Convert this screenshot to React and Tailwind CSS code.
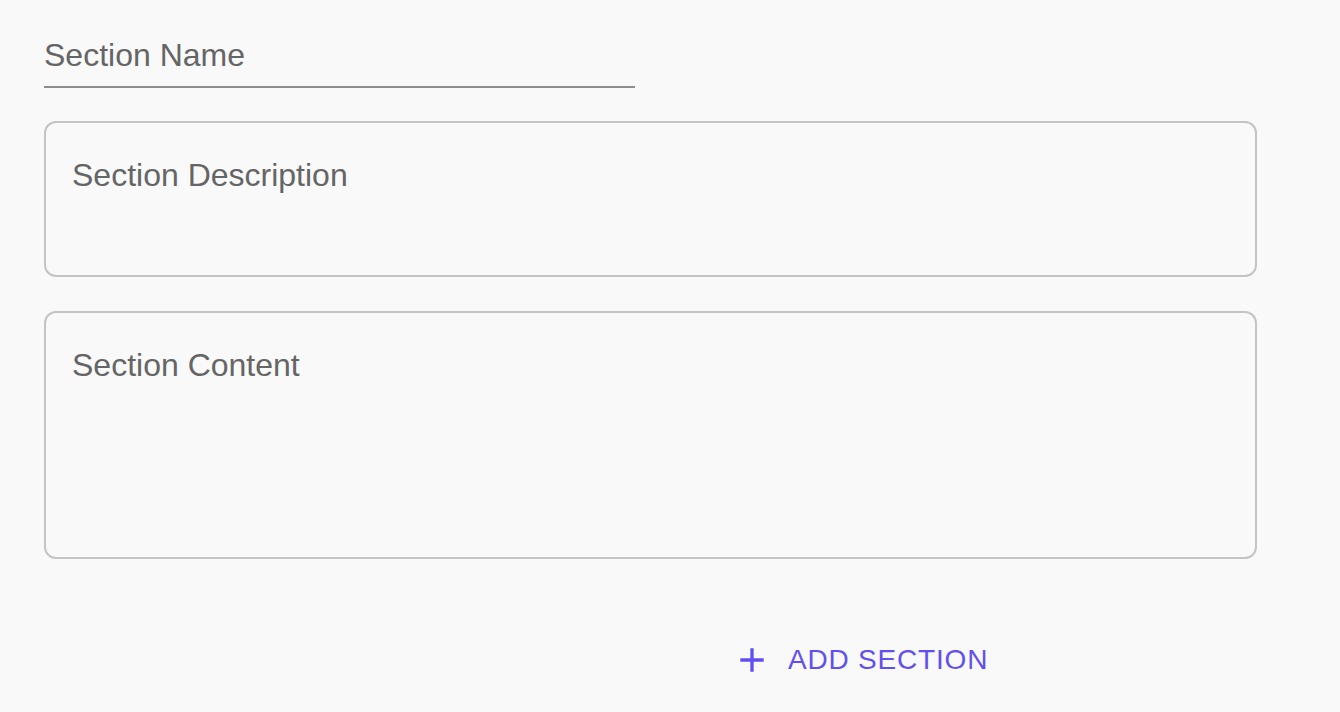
import React from "react";

const font = { fontFamily: '"Liberation Sans", Arial, sans-serif' };

const AddIcon = () => (
  <svg viewBox="0 0 24 24" className="w-10 h-10 fill-[#6150f0]">
    <path d="M19 13h-6v6h-2v-6H5v-2h6V5h2v6h6v2z" />
  </svg>
);

const App = () => {
  return (
    <div
      className="w-[1340px] h-[712px] bg-[#f9f9f9] overflow-hidden"
      style={font}
    >
      <div className="pl-[44px] pt-[37px] w-[1257px]">
        {/* Section name */}
        <div className="w-[591px] border-b-2 border-[#8e8e8e] pb-[13px]">
          <div className="text-[32px] leading-[36px] text-[#656565]">
            Section Name
          </div>
        </div>

        {/* Description */}
        <div className="mt-[33px] h-[156px] border-2 border-[#c4c4c4] rounded-[12px] pl-[26px] pt-[34px]">
          <div className="text-[32px] leading-[36px] text-[#656565]">
            Section Description
          </div>
        </div>

        {/* Content */}
        <div className="mt-[34px] h-[248px] border-2 border-[#c4c4c4] rounded-[12px] pl-[26px] pt-[34px]">
          <div className="text-[32px] leading-[36px] text-[#656565]">
            Section Content
          </div>
        </div>

        <div className="mt-[81px] pl-[680px]">
          <button className="flex items-center px-4 py-0 h-[40px] text-[#6150f0]">
            <span className="-ml-2 mr-4 flex">
              <AddIcon />
            </span>
            <span className="text-[28px] leading-[36px] tracking-[0.8px] uppercase">
              Add Section
            </span>
          </button>
        </div>
      </div>
    </div>
  );
};

export default App;
